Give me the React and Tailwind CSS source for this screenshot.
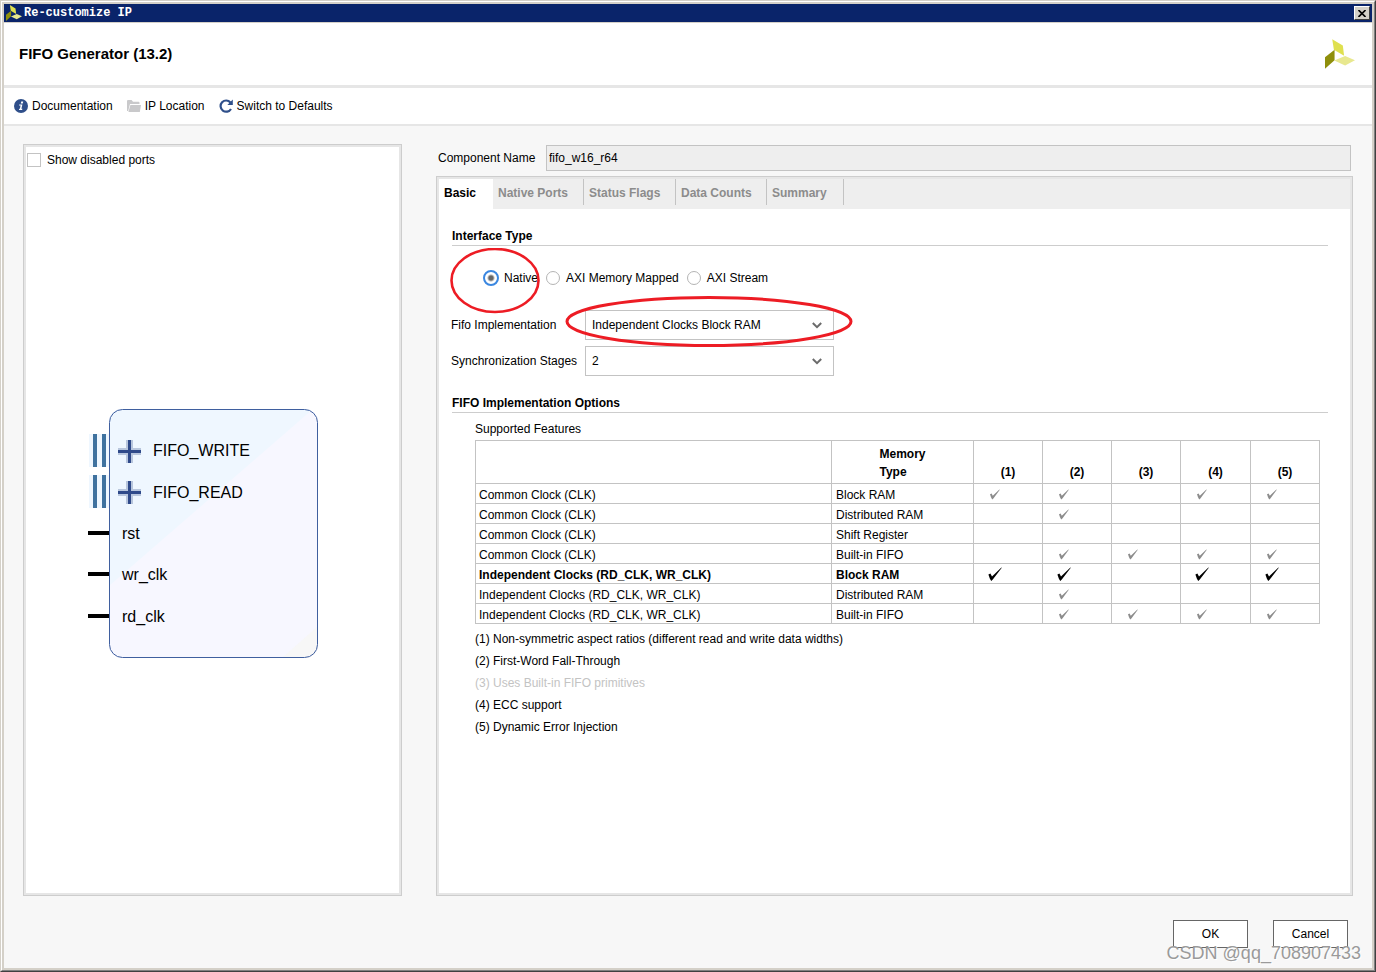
import React, { useState } from 'react';
import clsx from 'clsx';

const tabs = [
  { name: 'Basic', width: 'w-[54px]' },
  { name: 'Native Ports', width: 'w-[91px]' },
  { name: 'Status Flags', width: 'w-[92px]' },
  { name: 'Data Counts', width: 'w-[91px]' },
  { name: 'Summary', width: 'w-[77px]' },
];

const interfaceTypes = ['Native', 'AXI Memory Mapped', 'AXI Stream'];

const features = [
  { clock: 'Common Clock (CLK)', memory: 'Block RAM', checks: [1, 2, 4, 5] },
  { clock: 'Common Clock (CLK)', memory: 'Distributed RAM', checks: [2] },
  { clock: 'Common Clock (CLK)', memory: 'Shift Register', checks: [] },
  { clock: 'Common Clock (CLK)', memory: 'Built-in FIFO', checks: [2, 3, 4, 5] },
  { clock: 'Independent Clocks (RD_CLK, WR_CLK)', memory: 'Block RAM', checks: [1, 2, 4, 5], active: true },
  { clock: 'Independent Clocks (RD_CLK, WR_CLK)', memory: 'Distributed RAM', checks: [2] },
  { clock: 'Independent Clocks (RD_CLK, WR_CLK)', memory: 'Built-in FIFO', checks: [2, 3, 4, 5] },
];

const notes = [
  { text: '(1) Non-symmetric aspect ratios (different read and write data widths)' },
  { text: '(2) First-Word Fall-Through' },
  { text: '(3) Uses Built-in FIFO primitives', disabled: true },
  { text: '(4) ECC support' },
  { text: '(5) Dynamic Error Injection' },
];

const Logo = ({ className }) => (
  <svg viewBox="0 0 91 90" className={className} aria-hidden="true">
    <path d="M22 0 L54 19 L58 50 L27 32 Z" fill="#dfe04f" />
    <path d="M0 55 L29 32 L29 64 L0 90 Z" fill="#8f8f0c" />
    <path d="M28 65 L61 51 L91 64 L61 80 Z" fill="#e8e88f" />
  </svg>
);

const InfoIcon = () => (
  <svg viewBox="0 0 14 14" className="w-3.5 h-3.5" aria-hidden="true">
    <circle cx="7" cy="7" r="7" fill="#2f4f8a" />
    <path d="M7.2 2.6h2l-.4 1.8h-2z" fill="#fff" />
    <path d="M5.2 5.4h3.2l-1 4.4h1l-.3 1.2H4.9l.3-1.2h.7l.7-3.2H5z" fill="#fff" />
  </svg>
);

const FolderIcon = () => (
  <svg viewBox="0 0 14 12" className="w-3.5 h-3" aria-hidden="true">
    <path d="M0 11V1.2Q0 0 1 0h3.6l1.4 1.8h5.6q.9 0 .9 1V4H3L1.2 11z" fill="#c9c9cb" />
    <path d="M3.4 5H14l-1.2 7H1.4z" fill="#c9c9cb" />
  </svg>
);

const RefreshIcon = () => (
  <svg viewBox="0 0 14 14" className="w-3.5 h-3.5" aria-hidden="true">
    <path d="M11.4 3.4A5.6 5.6 0 1 0 12 10" fill="none" stroke="#2f4f8a" strokeWidth="2.2" />
    <path d="M13.8 0.6V6H8.4z" fill="#2f4f8a" />
  </svg>
);

const CheckIcon = ({ active }) => (
  <svg
    viewBox="0 0 14 14"
    className={clsx('ml-3.5 w-3.5 h-3.5', active ? 'text-black' : 'text-[#8c8c8c]')}
    role="img"
    aria-label="supported"
  >
    {active ? (
      <path d="M0.4 7.6L2.4 6.6L4 9.4L13.4 0.4L13.8 0.8L4.8 12.4L3.2 14L1.8 11.4z" fill="currentColor" />
    ) : (
      <path d="M2 7.2L3.6 6.4L4.8 8.8L11.4 2.4L11.8 2.8L5.4 11.4L4.2 12.4L3 10.2z" fill="currentColor" />
    )}
  </svg>
);

const PortDiagram = () => (
  <svg
    viewBox="0 0 249 250"
    className="w-[249px] h-[250px] font-['Liberation_Sans',Arial,sans-serif] text-[16px]"
    role="img"
    aria-label="FIFO ports"
  >
    <defs>
      <clipPath id="block">
        <rect x="21" y="0" width="209" height="249" rx="13" />
      </clipPath>
    </defs>
    <g clipPath="url(#block)">
      <rect x="21" width="209" height="249" fill="#f7f7ff" />
      <path d="M21 0H225L21 177z" fill="#eff7ff" />
      <path d="M230 217V249H194z" fill="#f7f7f7" />
    </g>
    <rect x="21.5" y="0.5" width="208" height="248" rx="13" fill="none" stroke="#3f5f9f" />
    {[25, 66].map((y) => (
      <g key={y}>
        <rect x="1" y={y} width="20" height="33" fill="#eff7ff" />
        <rect x="5" y={y} width="4" height="33" fill="#3f729f" />
        <rect x="14" y={y} width="4" height="33" fill="#3f729f" />
        <path d={`M30 ${y + 17.5}h23M41.5 ${y + 6}v23`} stroke="#b8c6dd" strokeWidth="7" />
        <path d={`M30 ${y + 17.5}h23M41.5 ${y + 6}v23`} stroke="#2f4a8a" strokeWidth="3" />
      </g>
    ))}
    {[124, 165, 207].map((y) => (
      <rect key={y} x="0" y={y - 2} width="21" height="4" fill="#000" />
    ))}
    <text x="65" y="47">FIFO_WRITE</text>
    <text x="65" y="89">FIFO_READ</text>
    <text x="34" y="130">rst</text>
    <text x="34" y="171">wr_clk</text>
    <text x="34" y="213">rd_clk</text>
  </svg>
);

const SelectField = ({ id, label, options, children }) => (
  <div className="relative flex items-center">
    <label htmlFor={id} className="w-[134px]">{label}</label>
    <div className="relative">
      <select
        id={id}
        className="block appearance-none w-[249px] h-[30px] pl-1.5 pr-8 bg-white border border-[#c3c3c3] outline-none"
      >
        {options.map((option) => (
          <option key={option}>{option}</option>
        ))}
      </select>
      <svg
        viewBox="0 0 10 7"
        className="absolute right-3 top-3 w-2.5 h-[7px] pointer-events-none"
        aria-hidden="true"
      >
        <path d="M0.8 1L5 5.2L9.2 1" fill="none" stroke="#6b6b6b" strokeWidth="2" />
      </svg>
    </div>
    {children}
  </div>
);

const SectionTitle = ({ children }) => (
  <h2 className="h-[18px] ml-px border-b border-[#cdcdcd] font-bold leading-4">{children}</h2>
);

const App = () => {
  const [activeTab, setActiveTab] = useState('Basic');
  const [interfaceType, setInterfaceType] = useState('Native');

  return (
    <div className="relative min-h-screen flex flex-col border-t border-l border-t-[#d4d0c8] border-l-[#d4d0c8] border-r border-b border-r-[#404040] border-b-[#404040] bg-[#f7f7f7] font-['Liberation_Sans',Arial,sans-serif] text-[12px] leading-4 text-black">
      <div className="flex-1 flex flex-col border-t border-l border-t-white border-l-white border-r border-b border-r-[#808080] border-b-[#808080]">
        <div className="flex-1 flex flex-col border-2 border-[#d4d0c8]">
          {/* Title bar */}
          <div className="flex items-center h-[19px] px-0.5 bg-[#0a246a] border-b border-[#d4d0c8] text-white">
            <Logo className="w-4 h-4" />
            <span className="ml-0.5 font-bold font-['Liberation_Mono',monospace]">Re-customize IP</span>
            <button
              aria-label="Close"
              className="ml-auto flex items-center justify-center w-4 h-3.5 bg-[#d4d0c8] border border-t-white border-l-white border-r-[#404040] border-b-[#404040]"
            >
              <svg viewBox="0 0 8 7" className="w-2 h-[7px]" aria-hidden="true">
                <path d="M0.5 0L7.5 7M7.5 0L0.5 7" stroke="#000" strokeWidth="1.6" />
              </svg>
            </button>
          </div>

          <header className="flex items-center justify-between h-[65px] pl-[15px] pr-[17px] bg-white border-b-3 border-[#e6e6e6]">
            <h1 className="text-[15px] font-bold">FIFO Generator (13.2)</h1>
            <Logo className="w-[30px] h-[30px]" />
          </header>

          {/* Toolbar */}
          <div className="flex items-center gap-3.5 h-[38px] px-2.5 bg-white border-b-2 border-[#e6e6e6]">
            <button className="flex items-center gap-1">
              <InfoIcon />
              Documentation
            </button>
            <button className="flex items-center gap-1">
              <FolderIcon />
              IP Location
            </button>
            <button className="flex items-center gap-1">
              <RefreshIcon />
              Switch to Defaults
            </button>
          </div>

          <main className="flex-1 flex gap-[34px] px-[19px] pt-[18px]">
            <section className="flex flex-col w-[379px] shrink-0 border border-[#cdcdcd] bg-white">
              <div className="flex-1 flex flex-col border-2 border-[#e6e6e6]">
                <label className="flex items-center gap-1.5 h-[26px] pl-px">
                  <input type="checkbox" className="appearance-none w-3.5 h-3.5 border border-[#c3c3c3] bg-white" />
                  Show disabled ports
                </label>
                <div className="flex-1 flex items-center justify-center pt-0.5">
                  <PortDiagram />
                </div>
              </div>
            </section>

            <div className="flex-1 flex flex-col min-w-0">
              <div className="flex items-center px-0.5 pt-px pb-[5px]">
                <label htmlFor="component-name" className="w-[108px]">Component Name</label>
                <input
                  id="component-name"
                  readOnly
                  defaultValue="fifo_w16_r64"
                  className="flex-1 h-[26px] px-0.5 border border-[#c3c3c3] bg-[#eeeeee] outline-none"
                />
              </div>

              <section className="flex-1 flex flex-col border border-[#cdcdcd] bg-white">
                <div className="flex-1 border-2 border-[#e6e6e6]">
                  <div role="tablist" className="flex items-start h-[30px] bg-[#eeeeee] font-bold">
                    {tabs.map((tab) => (
                      <button
                        key={tab.name}
                        role="tab"
                        aria-selected={tab.name === activeTab}
                        onClick={() => setActiveTab(tab.name)}
                        className={clsx(
                          'pl-[5px] text-left',
                          tab.width,
                          tab.name === activeTab
                            ? 'h-[30px] pb-0.5 bg-white'
                            : 'h-[26px] pt-0.5 border-r border-[#c3c3c3] text-[#8c8c8c]'
                        )}
                      >
                        {tab.name}
                      </button>
                    ))}
                  </div>

                  <div className="pl-3 pr-[22px] pt-[19px]">
                    <SectionTitle>Interface Type</SectionTitle>

                    {/* Interface choice */}
                    <div className="relative flex items-center h-4 mt-6 pl-8">
                      {interfaceTypes.map((type) => (
                        <label key={type} className="flex items-center mr-2">
                          <input
                            type="radio"
                            name="interface-type"
                            checked={type === interfaceType}
                            onChange={() => setInterfaceType(type)}
                            className="appearance-none w-3.5 h-3.5 mr-1.5 rounded-full border border-[#b4b4b4] bg-white checked:w-4 checked:h-4 checked:mr-[5px] checked:border-2 checked:border-[#3b87e0] checked:bg-[radial-gradient(circle,#666666_2px,#ffffff_4px)]"
                          />
                          {type}
                        </label>
                      ))}
                      <svg
                        viewBox="0 0 90 66"
                        className="absolute -left-px -top-[22px] w-[90px] h-[66px] pointer-events-none"
                        aria-hidden="true"
                      >
                        <ellipse cx="45" cy="32.5" rx="43.5" ry="31.5" fill="none" stroke="#ed1c24" strokeWidth="2.6" />
                      </svg>
                    </div>

                    <div className="flex flex-col gap-1.5 mt-6">
                      <SelectField
                        id="fifo-implementation"
                        label="Fifo Implementation"
                        options={['Independent Clocks Block RAM', 'Common Clock Block RAM']}
                      >
                        <svg
                          viewBox="0 0 288 52"
                          className="absolute z-10 left-[114px] -top-3.5 w-[288px] h-[52px] pointer-events-none"
                          aria-hidden="true"
                        >
                          <ellipse cx="144" cy="25.5" rx="142" ry="24" fill="none" stroke="#ed1c24" strokeWidth="3" />
                        </svg>
                      </SelectField>
                      <SelectField id="sync-stages" label="Synchronization Stages" options={['2', '3', '4']} />
                    </div>

                    <div className="mt-[19px]">
                      <SectionTitle>FIFO Implementation Options</SectionTitle>
                    </div>

                    <div className="pl-6 pr-2 pt-2">
                      <p>Supported Features</p>
                      <table className="mt-[3px] w-full table-fixed border-collapse text-left">
                        <colgroup>
                          <col />
                          <col className="w-[142px]" />
                          <col className="w-[69px]" />
                          <col className="w-[69px]" />
                          <col className="w-[69px]" />
                          <col className="w-[70px]" />
                          <col className="w-[69px]" />
                        </colgroup>
                        <thead>
                          <tr className="h-[43px]">
                            <th className="border border-[#c3c3c3]" />
                            <th className="border border-[#c3c3c3] p-0 pb-0.5 align-bottom text-center leading-[18px]">
                              <span className="inline-block text-left">
                                Memory
                                <br />
                                Type
                              </span>
                            </th>
                            {[1, 2, 3, 4, 5].map((n) => (
                              <th
                                key={n}
                                className="border border-[#c3c3c3] p-0 pb-0.5 align-bottom text-center leading-[18px]"
                              >
                                ({n})
                              </th>
                            ))}
                          </tr>
                        </thead>
                        <tbody>
                          {features.map((row, i) => (
                            <tr key={i} className={clsx('h-5', row.active && 'font-bold')}>
                              <td className="border border-[#c3c3c3] p-0 pt-0.5 pl-[3px]">{row.clock}</td>
                              <td className="border border-[#c3c3c3] p-0 pt-0.5 pl-1">{row.memory}</td>
                              {[1, 2, 3, 4, 5].map((n) => (
                                <td key={n} className="border border-[#c3c3c3] p-0">
                                  {row.checks.includes(n) && <CheckIcon active={row.active} />}
                                </td>
                              ))}
                            </tr>
                          ))}
                        </tbody>
                      </table>

                      <ul className="mt-1 leading-[22px]">
                        {notes.map((note) => (
                          <li key={note.text} className={note.disabled ? 'text-[#c3c3c3]' : ''}>
                            {note.text}
                          </li>
                        ))}
                      </ul>
                    </div>
                  </div>
                </div>
              </section>
            </div>
          </main>

          <footer className="flex justify-end gap-[25px] pt-6 pb-5 pr-6">
            <button className="w-[75px] h-7 border border-[#666666] bg-white">OK</button>
            <button className="w-[75px] h-7 border border-[#666666] bg-white">Cancel</button>
          </footer>
        </div>
      </div>

      <span className="absolute right-3.5 bottom-1.5 text-[18px] leading-6 text-[#9a9a9a] [text-shadow:1px_1px_0_#ffffff] pointer-events-none">
        CSDN @qq_708907433
      </span>
    </div>
  );
};

export default App;
